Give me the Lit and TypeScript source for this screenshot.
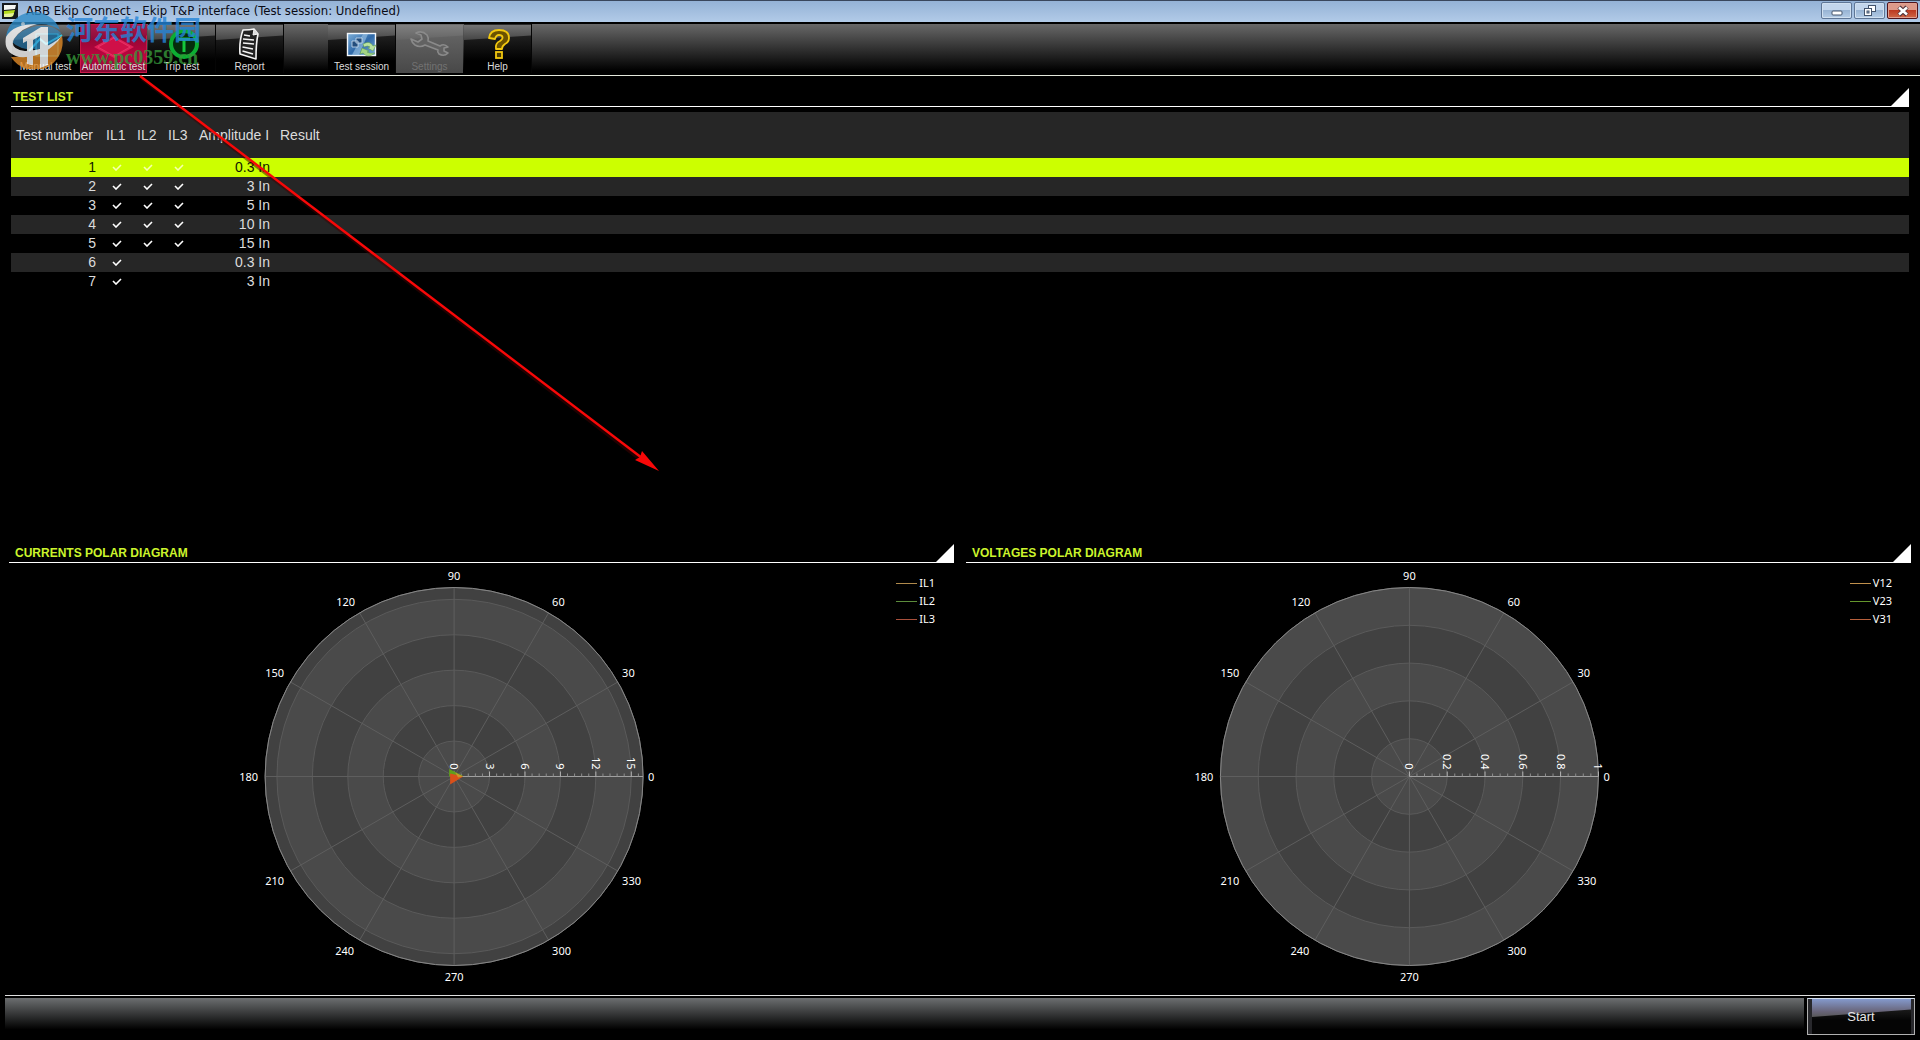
import { LitElement, html, svg, css, nothing } from "lit";
import { customElement, property } from "lit/decorators.js";

interface TestRow {
  n: number;
  phases: boolean[];
  amplitude: string;
}

const TESTS: TestRow[] = [
  { n: 1, phases: [true, true, true], amplitude: "0.3 In" },
  { n: 2, phases: [true, true, true], amplitude: "3 In" },
  { n: 3, phases: [true, true, true], amplitude: "5 In" },
  { n: 4, phases: [true, true, true], amplitude: "10 In" },
  { n: 5, phases: [true, true, true], amplitude: "15 In" },
  { n: 6, phases: [true, false, false], amplitude: "0.3 In" },
  { n: 7, phases: [true, false, false], amplitude: "3 In" },
];

/* Angle captions around the dial: text, x, y, anchor */
const ANGLES: [string, number, number, string][] = [
  ["0", 194, 0, "start"],
  ["30", 168, -104, "start"],
  ["60", 98, -175, "start"],
  ["90", 0, -201, "middle"],
  ["120", -99, -175, "end"],
  ["150", -170, -104, "end"],
  ["180", -196, 0, "end"],
  ["210", -170, 104, "end"],
  ["240", -100, 174, "end"],
  ["270", 0, 200, "middle"],
  ["300", 98, 174, "start"],
  ["330", 168, 104, "start"],
];

const RADIUS = 189;

@customElement("polar-chart")
export class PolarChart extends LitElement {
  @property() caption = "";
  @property({ type: Number }) max = 1;
  @property({ type: Number }) step = 0.2;
  @property({ type: Array }) series: { name: string; color: string }[] = [];
  @property({ type: Boolean }) vectors = false;

  static styles = css`
    :host {
      display: flex;
      align-items: flex-start;
      padding: 1px 19px 0 3px;
    }
    .dial {
      flex: 1;
      min-width: 0;
      height: 424px;
    }
    .dial text {
      font-family: "Noto Sans", "Liberation Sans", sans-serif;
      font-size: 11px;
      fill: #fff;
    }
    .legend {
      list-style: none;
      margin: 10px 0 0;
      padding: 0;
      font: 11px/18px "Noto Sans", "Liberation Sans", sans-serif;
      color: #fff;
    }
    .entry {
      display: flex;
      align-items: center;
      gap: 2px;
    }
    .swatch {
      width: 21px;
      height: 1px;
    }
  `;

  private rings() {
    const out = [];
    const count = Math.ceil(this.max / this.step - 0.001);
    for (let i = count; i >= 1; i--) {
      const r = Math.min(RADIUS, (i * this.step * RADIUS) / this.max);
      out.push(svg`<circle r=${r} fill=${i % 2 ? "#4a4a4a" : "#414141"} stroke="#5a5a5a" stroke-width="1"/>`);
    }
    return out;
  }

  private spokes() {
    const out = [];
    for (let a = 0; a < 360; a += 30) {
      const t = (a * Math.PI) / 180;
      out.push(svg`<line x1="0" y1="0" x2=${Math.cos(t) * RADIUS} y2=${Math.sin(t) * RADIUS} stroke="#5e5e5e" stroke-width="1"/>`);
    }
    return out;
  }

  private scale() {
    const out = [];
    const minor = this.step / 5;
    const total = Math.floor(this.max / minor + 0.001);
    for (let i = 0; i <= total; i++) {
      const x = (i * minor * RADIUS) / this.max;
      const major = i % 5 === 0;
      out.push(svg`<line x1=${x} x2=${x} y1="0" y2=${major ? -5 : -3} stroke=${major ? "#b4b4b4" : "#8e8e8e"} stroke-width="1"/>`);
      if (major) {
        const label = String(Math.round(((i / 5) * this.step) * 10) / 10);
        out.push(svg`<text transform="translate(${x - 4} -7) rotate(90)" text-anchor="end">${label}</text>`);
      }
    }
    return out;
  }

  render() {
    return html`
      <svg class="dial" viewBox="-235 -212.5 470 424" role="img" aria-label=${this.caption}>
        ${this.rings()}
        ${this.spokes()}
        <circle r=${RADIUS} fill="none" stroke="#868686" stroke-width="1"></circle>
        <line x1="0" y1="0" x2=${RADIUS} y2="0" stroke="#a0a0a0"></line>
        ${this.scale()}
        ${this.vectors
          ? svg`<path d="M-5 -7.5 L9 -.5 L-5 0Z" fill="#5fa01c"/>
                <path d="M-4 -3 L9 0 L-4 8Z" fill="#d9501a"/>
                <path d="M1 -4 L9 0 L4 1Z" fill="#c9952c"/>`
          : nothing}
        ${ANGLES.map(([t, x, y, anchor]) => svg`<text x=${x} y=${y + 4} text-anchor=${anchor}>${t}</text>`)}
      </svg>
      <ul class="legend">
        ${this.series.map(
          (s) => html`<li class="entry"><span class="swatch" style="background:${s.color}"></span>${s.name}</li>`
        )}
      </ul>
    `;
  }
}

const manualIcon = svg`
  <rect x="10" y="5" width="22" height="22" fill="#18303a" stroke="#35c8e0" stroke-width="1"/>
  <path d="M3 22 L14 10 L20 15 L36 6" fill="none" stroke="#35c8e0" stroke-width="2"/>`;
const autoIcon = svg`
  <path d="M0 18 L20 7 L40 18 L20 29Z" fill="#e02058"/>
  <path d="M4 18 L20 9 L36 18 L20 27Z" fill="#d01048" stroke="#ee4474" stroke-width=".6"/>`;
const tripIcon = svg`
  <circle cx="22" cy="15" r="13" fill="#052d0c" stroke="#0cae32" stroke-width="4"/>
  <path d="M16 10 H28 M22 10 V23" stroke="#14c83c" stroke-width="3" fill="none"/>`;
const reportIcon = svg`
  <path d="M13 1 Q20 1 24 0 L28 5 Q26 14 26 30 L10 25 Q9 12 13 1Z" fill="#222" stroke="#f4f4f4" stroke-width="1.6" stroke-linejoin="round"/>
  <path d="M24 0 L23 6 L28 5" fill="#ddd" stroke="#f4f4f4" stroke-width="1"/>
  <path d="M14 6 L20 7 M13 10 L24 11 M13 14 L24 15 M12.500 18 L23 20 M12.500 22 L23 25" stroke="#f4f4f4" stroke-width="1.4"/>`;
const sessionIcon = svg`
  <defs><linearGradient id="sky" x1="0" y1="0" x2="1" y2="1"><stop offset="0" stop-color="#7eb0da"/><stop offset=".5" stop-color="#2f69a8"/><stop offset="1" stop-color="#7fb2dc"/></linearGradient></defs>
  <rect x="5.500" y="4.500" width="28" height="22" fill="url(#sky)" stroke="#f4f8fc" stroke-width="1.400"/>
  <path d="M21 5 H26 L17 26 H10Z" fill="#9cc4e6" opacity=".6"/>
  <path d="M10 12 H16 V18 H10Z M14 9 H20 V14 H14Z" fill="#234d7c" stroke="#cfe2f4" stroke-width=".8"/>
  <path d="M21 15 Q28 11 31 17 L34 16 L31 22 L26 19 L28 18 Q26 16 22 18Z" fill="#b9e2a0" stroke="#5f9c48" stroke-width=".5"/>
  <path d="M33 24 Q26 30 21 24 L18 25 L20 19 L27 22 L25 23 Q28 25 33 24Z" fill="#a3d684" stroke="#5f9c48" stroke-width=".5"/>`;
const wrenchIcon = svg`
  <path d="M6 4 Q12 1 17 6 Q19 9 18 12 L30 17 Q34 14 38 18 L34 19 L34 22 L38 24 Q34 28 29 25 Q27 23 28 21 L15 16 Q10 19 5 16 Q2 14 1 10 L8 13 L12 10 L11 6Z" fill="#626262" stroke="#8a8a8a" stroke-width="1.600" stroke-linejoin="round"/>`;
const helpIcon = svg`
  <path d="M11 9 Q12 1 21 1 Q31 1 31 9 Q31 13 27 15 Q24 17 24 20 H18 Q17 14 22 12 Q25 10 24.500 8 Q24 6 21 6 Q18 6 17 10Z" fill="#6a5200" stroke="#f2c80f" stroke-width="1.800" stroke-linejoin="round"/>
  <rect x="18" y="23" width="6" height="6" fill="#4a3a00" stroke="#f2c80f" stroke-width="1.800"/>`;

@customElement("app-root")
export class AppRoot extends LitElement {
  static styles = css`
    :host {
      display: flex;
      flex-direction: column;
      position: relative;
      min-height: 100vh;
      overflow: hidden;
      background: #000;
      color: #dcdcdc;
      font-family: "Liberation Sans", Arial, sans-serif;
    }
    button {
      font-family: inherit;
      margin: 0;
      padding: 0;
    }
    .titlebar {
      display: flex;
      align-items: center;
      box-sizing: border-box;
      height: 22px;
      padding: 0 2px 2px;
      border-top: 1px solid #39465c;
      background: linear-gradient(#94b2d6, #b2cbe8);
    }
    .app-icon {
      width: 16px;
      height: 16px;
    }
    .title {
      flex: 1;
      margin: 0;
      padding-left: 8px;
      font: 13px/18px "DejaVu Sans Condensed", "Noto Sans", sans-serif;
      color: #0a0a14;
    }
    .win-buttons {
      display: flex;
      gap: 2px;
    }
    .win {
      box-sizing: border-box;
      width: 31px;
      height: 17px;
      display: grid;
      place-items: center;
      border: 1px solid #5f7696;
      border-radius: 2px;
      background: linear-gradient(#c3d6ec 0 45%, #98b4d4 50%, #b4cce6);
      box-shadow: inset 0 0 0 1px #d0e0f0;
    }
    .win.close {
      border-color: #50141c;
      background: linear-gradient(#dd9a8a 0 45%, #bc3a22 50%, #d06848);
      box-shadow: inset 0 0 0 1px #e0a090;
    }
    .win svg {
      width: 16px;
      height: 12px;
    }
    .toolbar {
      display: flex;
      gap: 1px;
      height: 51px;
      margin-top: 2px;
      padding-left: 12px;
      background: linear-gradient(#686868, #000 92%);
      border-bottom: 1px solid #e4e8dc;
    }
    .tool {
      position: relative;
      box-sizing: border-box;
      width: 67px;
      height: 49px;
      display: flex;
      flex-direction: column;
      align-items: center;
      gap: 1px;
      padding-top: 5px;
      border: 0;
      background: linear-gradient(#2e2e2e, #000 75%);
      box-shadow: 1px 0 0 #050505, inset 0 1px 0 #2a2a2a;
      color: #dcdcdc;
      font-size: 10px;
      line-height: 12px;
      white-space: nowrap;
    }
    .gloss {
      position: absolute;
      inset: 1px 0 auto 0;
      height: 15px;
      background: linear-gradient(#747474, #454545);
      clip-path: polygon(0 0, 100% 0, 100% 70%, 0 100%);
    }
    .tool svg {
      position: relative;
      width: 40px;
      height: 31px;
      overflow: visible;
    }
    .label {
      position: relative;
    }
    .tool.active {
      background: linear-gradient(#78082c, #c00440 70%, #7c0a30);
      box-shadow: inset 0 0 0 1px #c81848;
    }
    .tool.active .gloss {
      background: linear-gradient(#a81848, #8c0c38);
    }
    .tool:disabled {
      background: linear-gradient(#6a6a6a, #484848);
      box-shadow: none;
      color: #727272;
    }
    .tool:disabled .gloss {
      background: linear-gradient(#808080, #646464);
    }
    .tool.gap {
      margin-left: 44px;
    }
    .panel-head {
      display: flex;
      align-items: center;
      justify-content: space-between;
      height: 18px;
      padding-left: 6px;
      border-bottom: 1px solid #fff;
    }
    .panel-head h2 {
      margin: 0;
      font-size: 12px;
      line-height: 18px;
      color: #ccf52c;
    }
    .corner {
      width: 18px;
      height: 18px;
      background: #fff;
      clip-path: polygon(100% 0, 100% 100%, 0 100%);
    }
    .tests {
      flex: 1;
      padding: 12px 11px 0;
    }
    .tests .panel-head {
      padding-left: 2px;
    }
    table {
      width: 100%;
      margin-top: 5px;
      table-layout: fixed;
      border-collapse: collapse;
      font-size: 14px;
      line-height: 19px;
    }
    th {
      height: 46px;
      padding: 0 5px;
      font-weight: 400;
      text-align: left;
      background: #262626;
      white-space: nowrap;
    }
    td {
      height: 19px;
      padding: 0 5px;
      text-align: right;
    }
    .c-num {
      width: 90px;
    }
    .c-phase {
      width: 31px;
    }
    .c-amp {
      width: 81px;
    }
    td.phase {
      text-align: center;
      line-height: 0;
    }
    td.phase svg {
      width: 10px;
      height: 7px;
    }
    tbody tr:nth-child(even) {
      background: #262626;
    }
    tbody tr.selected {
      background: #ccff00;
      color: #101800;
    }
    .charts {
      display: grid;
      grid-template-columns: 1fr 1fr;
      gap: 12px;
      padding: 0 9px 7px;
    }
    .footer {
      display: flex;
      gap: 3px;
      margin: 0 5px 5px;
      padding-top: 2px;
      border-top: 1px solid #e0e0e0;
    }
    .status {
      flex: 1;
      background: linear-gradient(#6c6e70, #000 85%);
    }
    .start {
      position: relative;
      box-sizing: border-box;
      width: 108px;
      height: 37px;
      border: 1px solid #b0b0b0;
      border-top-color: #d0dcec;
      background: linear-gradient(#303030, #050505 60%);
      box-shadow: inset 4px 0 0 #28282c, inset -3px 0 0 #28282c;
      color: #e6e6e6;
      font-size: 13px;
    }
    .start .gloss {
      inset: 0 3px auto 4px;
      height: 18px;
      background: linear-gradient(#8499cc, #686478 70%, #585858);
      clip-path: polygon(0 0, 100% 0, 100% 58%, 0 100%);
    }
    .overlay {
      position: absolute;
      top: 0;
      left: 0;
      width: 680px;
      height: 490px;
      pointer-events: none;
    }
    .site-mark {
      position: absolute;
      top: 11px;
      left: 5px;
      display: flex;
      gap: 3px;
      pointer-events: none;
      opacity: 0.8;
    }
    .site-mark svg {
      width: 58px;
      height: 58px;
    }
    .site-name {
      display: block;
      font: 700 27px/36px "Noto Sans CJK SC", sans-serif;
      color: #2484d8;
      white-space: nowrap;
    }
    .site-url {
      display: block;
      font: 700 20px/20px "Liberation Serif", serif;
      color: #36983a;
    }
  `;

  private tool(label: string, icon: unknown, cls = "", disabled = false) {
    return html`<button class="tool ${cls}" type="button" ?disabled=${disabled}>
      <span class="gloss"></span>
      <svg viewBox="0 0 40 31" aria-hidden="true">${icon}</svg>
      <span class="label">${label}</span>
    </button>`;
  }

  private check(selected: boolean) {
    return html`<svg viewBox="0 0 10 7" role="img" aria-label="on">
      <path d="M1 3 L4 6 L9 1" fill="none" stroke=${selected ? "#f6ffb0" : "#fff"} stroke-width="1.600"></path>
    </svg>`;
  }

  render() {
    return html`
      <header class="titlebar">
        <svg class="app-icon" viewBox="0 0 16 16" aria-hidden="true">
          <rect width="16" height="16" fill="#15191c" />
          <path d="M2 2 H14 L13 6 L2 7Z" fill="#f4f6f2" />
          <path d="M2 8 L13 7 L11 13 Q10 14 8 14 H2Z" fill="#b4dc1e" />
          <path d="M2 11 L12 10 L11 13 L8 14 H2Z" fill="#e6f29a" />
        </svg>
        <h1 class="title">ABB Ekip Connect - Ekip T&amp;P interface (Test session: Undefined)</h1>
        <div class="win-buttons">
          <button class="win" type="button" aria-label="Minimize">
            <svg viewBox="0 0 16 12"><rect x="3" y="6" width="10" height="4" rx="1" fill="#fff" stroke="#44546c" /></svg>
          </button>
          <button class="win" type="button" aria-label="Restore">
            <svg viewBox="0 0 16 12">
              <rect x="6.500" y=".5" width="7" height="6" fill="#fff" stroke="#44546c" />
              <rect x="2.500" y="3.500" width="7" height="7" fill="#fff" stroke="#44546c" />
              <rect x="5" y="6" width="2" height="2" fill="#a8c0dc" stroke="#44546c" />
            </svg>
          </button>
          <button class="win close" type="button" aria-label="Close">
            <svg viewBox="0 0 16 12">
              <path d="M4 2 L12 10 M12 2 L4 10" stroke="#4c3038" stroke-width="4.500" />
              <path d="M4 2.500 L12 9.500 M12 2.500 L4 9.500" stroke="#fff" stroke-width="2.600" />
            </svg>
          </button>
        </div>
      </header>

      <nav class="toolbar" aria-label="Main tools">
        ${this.tool("Manual test", manualIcon)}
        ${this.tool("Automatic test", autoIcon, "active")}
        ${this.tool("Trip test", tripIcon)}
        ${this.tool("Report", reportIcon)}
        ${this.tool("Test session", sessionIcon, "gap")}
        ${this.tool("Settings", wrenchIcon, "", true)}
        ${this.tool("Help", helpIcon)}
      </nav>

      <section class="tests">
        <div class="panel-head"><h2>TEST LIST</h2><span class="corner"></span></div>
        <table>
          <colgroup>
            <col class="c-num" /><col class="c-phase" /><col class="c-phase" /><col class="c-phase" /><col class="c-amp" /><col />
          </colgroup>
          <thead>
            <tr>
              <th scope="col">Test number</th>
              <th scope="col">IL1</th>
              <th scope="col">IL2</th>
              <th scope="col">IL3</th>
              <th scope="col">Amplitude I</th>
              <th scope="col">Result</th>
            </tr>
          </thead>
          <tbody>
            ${TESTS.map(
              (t) => html`<tr class=${t.n === 1 ? "selected" : ""}>
                <td>${t.n}</td>
                ${t.phases.map((on) => html`<td class="phase">${on ? this.check(t.n === 1) : nothing}</td>`)}
                <td>${t.amplitude}</td>
                <td></td>
              </tr>`
            )}
          </tbody>
        </table>
      </section>

      <div class="charts">
        <section>
          <div class="panel-head"><h2>CURRENTS POLAR DIAGRAM</h2><span class="corner"></span></div>
          <polar-chart
            caption="Currents polar diagram"
            .max=${16}
            .step=${3}
            .vectors=${true}
            .series=${[
              { name: "IL1", color: "#b08a4c" },
              { name: "IL2", color: "#5c8c3c" },
              { name: "IL3", color: "#a8503c" },
            ]}
          ></polar-chart>
        </section>
        <section>
          <div class="panel-head"><h2>VOLTAGES POLAR DIAGRAM</h2><span class="corner"></span></div>
          <polar-chart
            caption="Voltages polar diagram"
            .max=${1}
            .step=${0.2}
            .series=${[
              { name: "V12", color: "#c0904c" },
              { name: "V23", color: "#64962c" },
              { name: "V31", color: "#b8603c" },
            ]}
          ></polar-chart>
        </section>
      </div>

      <footer class="footer">
        <div class="status"></div>
        <button class="start" type="button"><span class="gloss"></span><span class="label">Start</span></button>
      </footer>

      <div class="site-mark">
        <svg viewBox="0 0 58 58" aria-hidden="true">
          <path d="M1 26 A28 28 0 0 1 55 19 Q42 10 24 15 Q8 20 1 26Z" fill="#2f8cc8" />
          <path d="M7 31 Q14 18 32 15 Q48 13 56 22 Q50 36 34 38 Q16 40 7 31Z" fill="#2f8cc8" opacity=".75" />
          <path d="M6 46 Q36 46 57 25 A28 28 0 0 1 6 46Z" fill="#e08a28" />
          <path d="M1 26 Q-2 42 14 46 Q40 48 57 25 Q40 40 20 40 Q4 38 9 28 Q16 17 32 13 Q8 13 1 26Z" fill="#fff" />
          <path d="M18 27 L28 21 V54 L22 53 V30 L18 32Z" fill="#fff" />
          <path d="M28 21 L36 16 H43 V54 L35 57 V25 L28 29Z" fill="#fff" />
          <circle cx="18" cy="13" r="2" fill="#bfe0f4" />
        </svg>
        <div>
          <span class="site-name">河东软件园</span>
          <span class="site-url">www.pc0359.cn</span>
        </div>
      </div>

      <svg class="overlay" viewBox="0 0 680 490" aria-hidden="true">
        <path d="M142 79 L642 461" stroke="#400" stroke-width="3" opacity=".5" />
        <path d="M140 76 L642 458" stroke="#f80808" stroke-width="2.500" />
        <path d="M659 471 L635 460 L640 457 L642 451Z" fill="#f80808" />
      </svg>
    `;
  }
}
